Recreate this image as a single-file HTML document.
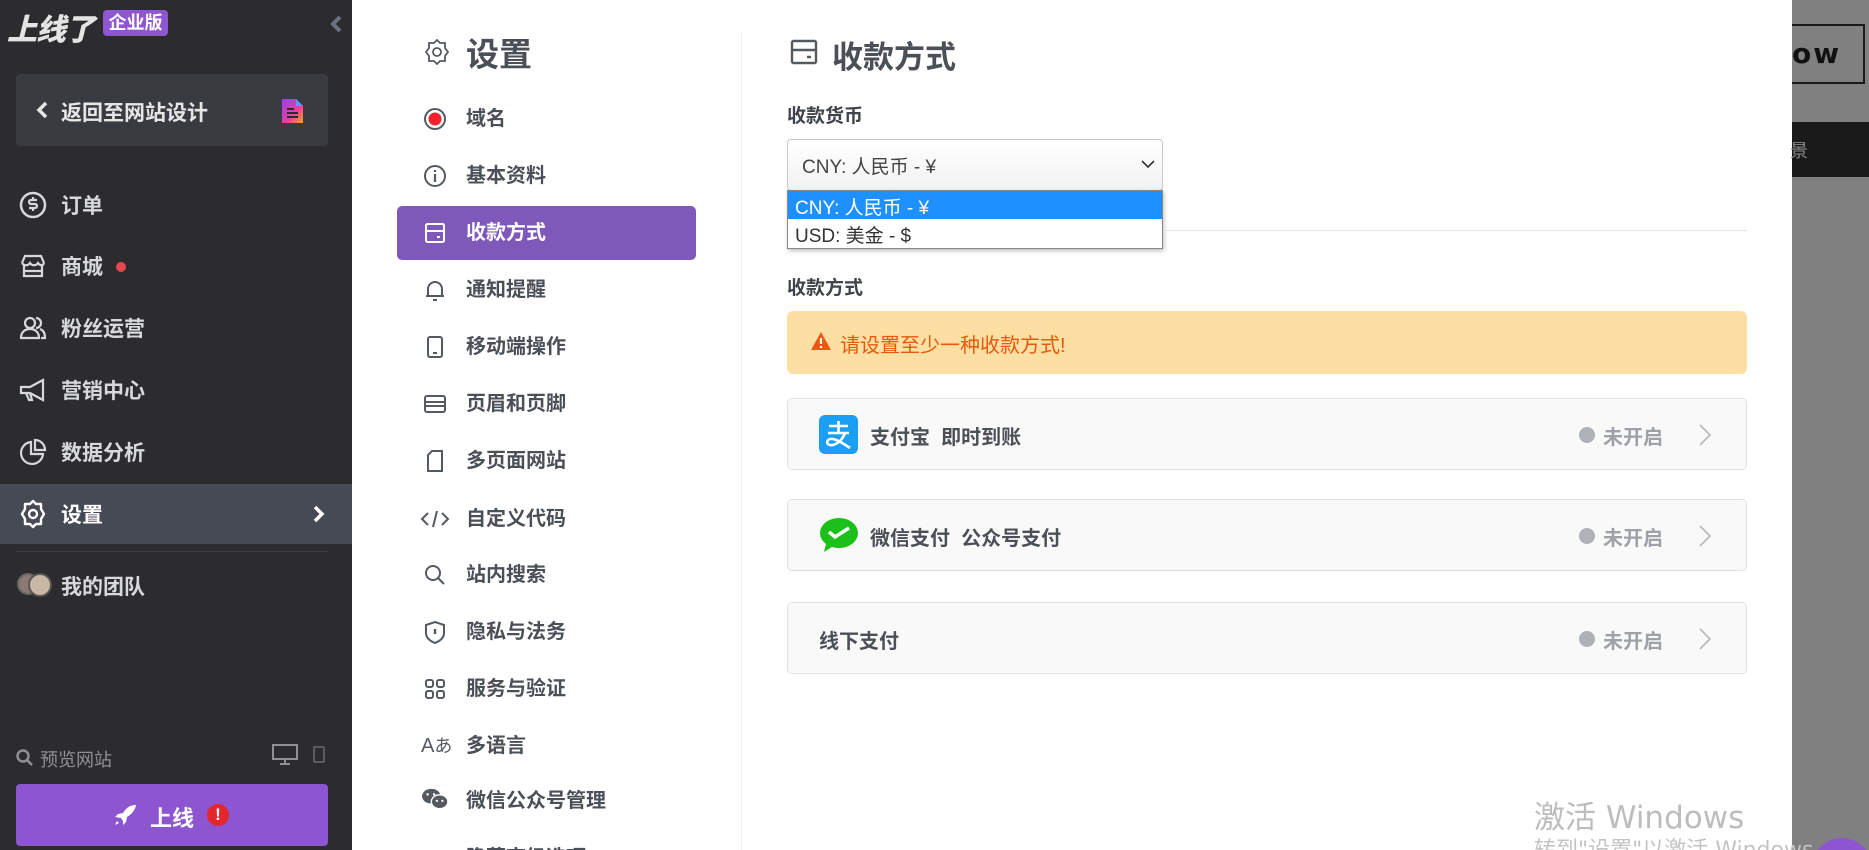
<!DOCTYPE html>
<html style="height:850px;overflow:hidden"><head><meta charset="utf-8"><style>
*{margin:0;padding:0;box-sizing:border-box}
html,body{width:1869px;height:850px;overflow:hidden}
body{position:relative;background:#fff;font-family:"Liberation Sans","Noto Sans CJK SC",sans-serif}
#wrap{position:absolute;left:0;top:0;width:1869px;height:850px;overflow:hidden}
.a{position:absolute}
#side{left:0;top:0;width:352px;height:850px;background:#2c2c2f}
.mi{position:absolute;left:0;width:352px;height:60px;display:flex;align-items:center;color:#d6d8dc;font-size:21px;font-weight:bold}
.mi svg{position:absolute;left:18px}
.mi span{position:absolute;left:61px}
.sn{position:absolute;left:466px;font-size:20px;font-weight:bold;color:#4b5058;line-height:28px}
.si{position:absolute;left:423px;width:24px;height:24px}
.card{position:absolute;left:787px;width:960px;height:72px;background:#f9f9f9;border:1px solid #e1e1e1;border-radius:5px}
.card .t{position:absolute;top:22px;font-size:20px;font-weight:bold;color:#4b5058}
.card .st{position:absolute;left:815px;top:22px;font-size:20px;font-weight:bold;color:#9ea1a6}
.card .dot{position:absolute;left:791px;top:28px;width:16px;height:16px;border-radius:50%;background:#aeb1b6}
.card .ch{position:absolute;left:910px;top:24px}
</style></head><body><div id="wrap">
<div id="side" class="a">
 <div class="a" style="left:7px;top:5px;font-size:30px;font-weight:900;color:#e4e4e4;font-style:italic;letter-spacing:-1px">上线了</div>
 <div class="a" style="left:103px;top:10px;width:65px;height:26px;background:#8f56d1;border-radius:4px;color:#fff;font-size:18px;font-weight:bold;text-align:center;line-height:26px">企业版</div>
 <svg class="a" style="left:328px;top:14px" width="16" height="20" viewBox="0 0 16 20"><path d="M12 3L5 10l7 7" stroke="#6b7280" stroke-width="4" fill="none"/></svg>
 <div class="a" style="left:16px;top:74px;width:312px;height:72px;background:#3a3b40;border-radius:4px"></div>
 <svg class="a" style="left:35px;top:100px" width="14" height="20" viewBox="0 0 14 20"><path d="M11 3L4 10l7 7" stroke="#e6e6e6" stroke-width="3.5" fill="none"/></svg>
 <div class="a" style="left:61px;top:97px;font-size:21px;font-weight:bold;color:#e6e6e6">返回至网站设计</div>
 <svg class="a" style="left:282px;top:99px" width="22" height="24" viewBox="0 0 22 24"><defs><linearGradient id="g" x1="0" y1="0" x2="1" y2="1"><stop offset="0" stop-color="#9b3cf0"/><stop offset=".6" stop-color="#e8409a"/><stop offset="1" stop-color="#f6a21a"/></linearGradient></defs><path d="M0 0h14l7 7v17H0z" fill="url(#g)"/><path d="M14 0l7 7h-7z" fill="#4aa2ff"/><path d="M5 10h7M5 14h11M5 18h11" stroke="#2c2c2f" stroke-width="2"/></svg>
 <div class="mi" style="top:175px"><svg width="30" height="30" viewBox="0 0 30 30"><circle cx="15" cy="15" r="12" stroke="#d6d8dc" stroke-width="2.5" fill="none"/><path d="M19 10h-6a2 2 0 000 4h4a2 2 0 010 4h-6M15 7v3M15 18v3" stroke="#d6d8dc" stroke-width="2.2" fill="none"/></svg><span>订单</span></div>
 <div class="mi" style="top:236px"><svg width="30" height="30" viewBox="0 0 30 30"><path d="M4 12l3-7h16l3 7M4 12c2 3 6 3 8 0 2 3 6 3 8 0 2 3 5 3 6 0M6 14v11h18V14M6 20h18" stroke="#d6d8dc" stroke-width="2.2" fill="none"/></svg><span>商城</span><i class="a" style="left:116px;top:26px;width:10px;height:10px;border-radius:50%;background:#e5484d"></i></div>
 <div class="mi" style="top:298px"><svg width="30" height="30" viewBox="0 0 30 30"><circle cx="12" cy="10" r="5" stroke="#d6d8dc" stroke-width="2.2" fill="none"/><path d="M3 25c0-6 4-9 9-9s9 3 9 9zM18 5a5 5 0 010 10M22 16c3 1 5 4 5 9h-4" stroke="#d6d8dc" stroke-width="2.2" fill="none"/></svg><span>粉丝运营</span></div>
 <div class="mi" style="top:360px"><svg width="30" height="30" viewBox="0 0 30 30"><path d="M3 12h9l13-7v20l-13-7H3zM8 18l3 7h3l-2-7" stroke="#d6d8dc" stroke-width="2.2" fill="none"/></svg><span>营销中心</span></div>
 <div class="mi" style="top:422px"><svg width="30" height="30" viewBox="0 0 30 30"><path d="M13 5a11 11 0 1012 12H13z" stroke="#d6d8dc" stroke-width="2.2" fill="none"/><path d="M17 3v10h10A10 10 0 0017 3z" stroke="#d6d8dc" stroke-width="2.2" fill="none"/></svg><span>数据分析</span></div>
 <div class="a" style="left:0;top:484px;width:352px;height:60px;background:#464a55"></div>
 <div class="mi" style="top:484px;color:#fff"><svg width="30" height="30" viewBox="0 0 30 30"><path d="M15 2l3 3h5v5l3 5-3 5v5h-5l-3 3-3-3H7v-5l-3-5 3-5V5h5z" stroke="#fff" stroke-width="2.4" fill="none" stroke-linejoin="round"/><circle cx="15" cy="15" r="4" stroke="#fff" stroke-width="2.4" fill="none"/></svg><span>设置</span><svg style="left:312px" width="14" height="20" viewBox="0 0 14 20"><path d="M3 3l7 7-7 7" stroke="#fff" stroke-width="3.5" fill="none"/></svg></div>
 <div class="a" style="left:16px;top:551px;width:312px;height:1px;background:#3e3f44"></div>
 <div class="a" style="left:17px;top:573px;width:22px;height:22px;border-radius:50%;background:#8a7a70;border:2px solid #666"></div>
 <div class="a" style="left:28px;top:573px;width:24px;height:24px;border-radius:50%;background:#c9b7a6;border:2px solid #555"></div>
 <div class="mi" style="top:556px"><span>我的团队</span></div>
 <svg class="a" style="left:15px;top:748px" width="20" height="20" viewBox="0 0 20 20"><circle cx="8" cy="8" r="5.5" stroke="#8e9095" stroke-width="2.5" fill="none"/><path d="M12 12l5 5" stroke="#8e9095" stroke-width="2.5"/></svg>
 <div class="a" style="left:40px;top:746px;font-size:18px;color:#8e9095">预览网站</div>
 <svg class="a" style="left:272px;top:744px" width="26" height="22" viewBox="0 0 26 22"><rect x="1" y="1" width="24" height="14" stroke="#8e9095" stroke-width="2" fill="none"/><path d="M13 15v4M8 20h10" stroke="#8e9095" stroke-width="2"/></svg>
 <svg class="a" style="left:313px;top:746px" width="12" height="18" viewBox="0 0 12 18"><rect x="1" y="1" width="10" height="15" rx="1" stroke="#5a5c61" stroke-width="2" fill="none"/></svg>
 <div class="a" style="left:16px;top:784px;width:312px;height:62px;background:#8e55d0;border-radius:4px"></div>
 <svg class="a" style="left:114px;top:804px" width="24" height="22" viewBox="0 0 24 22"><path d="M22 1c-6 0-10 3-13 8l-5 1-3 3 6 1 2 3v4l3-3 1-5c5-3 8-7 9-12zM3 17l-2 4 4-2" fill="#fff"/></svg>
 <div class="a" style="left:150px;top:801px;font-size:22px;font-weight:bold;color:#fff">上线</div>
 <div class="a" style="left:207px;top:804px;width:22px;height:22px;border-radius:50%;background:#e5262d;color:#fff;font-size:17px;font-weight:bold;text-align:center;line-height:22px">!</div>
</div>

<div class="a" style="left:1792px;top:0;width:77px;height:850px;background:#808080"></div>
<div class="a" style="left:1792px;top:24px;width:73px;height:60px;border:2px solid #1a1a1a;border-left:none"></div>
<div class="a" style="left:1792px;top:37px;font-size:28px;font-weight:bold;color:#111;letter-spacing:2px;font-family:'DejaVu Sans',sans-serif">ow</div>
<div class="a" style="left:1792px;top:122px;width:77px;height:55px;background:#1a1a1a"></div>
<div class="a" style="left:1790px;top:137px;font-size:18px;color:#888">景</div>
<div class="a" style="left:1812px;top:838px;width:60px;height:60px;border-radius:50%;background:#8e55d0"></div>

<svg class="si" style="top:38px;width:28px;height:28px" viewBox="0 0 28 28"><path d="M14 2l3 3h5v5l3 4-3 4v5h-5l-3 3-3-3H6v-5l-3-4 3-4V5h5z" stroke="#555a61" stroke-width="1.8" fill="none"/><circle cx="14" cy="14" r="4" stroke="#555a61" stroke-width="1.8" fill="none"/></svg>
<div class="a" style="left:466px;top:28px;font-size:33px;font-weight:bold;color:#4b5058">设置</div>
<svg class="si" style="top:107px" viewBox="0 0 24 24"><circle cx="12" cy="12" r="10" stroke="#555a61" stroke-width="2" fill="none"/><circle cx="12" cy="12" r="6.5" fill="#f5222d"/></svg>
<div class="sn" style="top:105px">域名</div>
<svg class="si" style="top:164px" viewBox="0 0 24 24"><circle cx="12" cy="12" r="10" stroke="#555a61" stroke-width="2" fill="none"/><path d="M12 10v8M12 6v2" stroke="#555a61" stroke-width="2.2"/></svg>
<div class="sn" style="top:162px">基本资料</div>
<div class="a" style="left:397px;top:206px;width:299px;height:54px;background:#7f59b9;border-radius:5px"></div>
<svg class="si" style="top:221px" viewBox="0 0 24 24"><rect x="3" y="3" width="18" height="18" rx="1.5" stroke="#fff" stroke-width="2" fill="none"/><path d="M3 10h18M14 16h3" stroke="#fff" stroke-width="2"/></svg>
<div class="sn" style="top:219px;color:#fff">收款方式</div>
<svg class="si" style="top:278px" viewBox="0 0 24 24"><path d="M5 18V11a7 7 0 0114 0v7zM3 18h18M10 22h4" stroke="#555a61" stroke-width="2" fill="none"/></svg>
<div class="sn" style="top:276px">通知提醒</div>
<svg class="si" style="top:335px" viewBox="0 0 24 24"><rect x="5" y="2" width="14" height="20" rx="2" stroke="#555a61" stroke-width="2" fill="none"/><path d="M10 18h4" stroke="#555a61" stroke-width="2"/></svg>
<div class="sn" style="top:333px">移动端操作</div>
<svg class="si" style="top:392px" viewBox="0 0 24 24"><rect x="2" y="4" width="20" height="16" rx="2" stroke="#555a61" stroke-width="2" fill="none"/><path d="M2 10h20M2 14h20" stroke="#555a61" stroke-width="2"/></svg>
<div class="sn" style="top:390px">页眉和页脚</div>
<svg class="si" style="top:449px" viewBox="0 0 24 24"><path d="M9 2h10v20H5V6z" stroke="#555a61" stroke-width="2" fill="none"/></svg>
<div class="sn" style="top:447px">多页面网站</div>
<svg class="si" style="top:507px;width:30px;left:420px" viewBox="0 0 30 24"><path d="M8 6L2 12l6 6M22 6l6 6-6 6M17 4l-4 16" stroke="#555a61" stroke-width="2" fill="none"/></svg>
<div class="sn" style="top:505px">自定义代码</div>
<svg class="si" style="top:563px" viewBox="0 0 24 24"><circle cx="10" cy="10" r="7" stroke="#555a61" stroke-width="2" fill="none"/><path d="M15 15l6 6" stroke="#555a61" stroke-width="2"/></svg>
<div class="sn" style="top:561px">站内搜索</div>
<svg class="si" style="top:620px" viewBox="0 0 24 24"><path d="M12 2l9 3v8c0 5-4 8-9 10-5-2-9-5-9-10V5z" stroke="#555a61" stroke-width="2" fill="none"/><path d="M12 9v5" stroke="#555a61" stroke-width="2.5"/></svg>
<div class="sn" style="top:618px">隐私与法务</div>
<svg class="si" style="top:677px" viewBox="0 0 24 24"><rect x="3" y="3" width="7" height="7" rx="2" stroke="#555a61" stroke-width="2" fill="none"/><rect x="14" y="3" width="7" height="7" rx="2" stroke="#555a61" stroke-width="2" fill="none"/><rect x="3" y="14" width="7" height="7" rx="2" stroke="#555a61" stroke-width="2" fill="none"/><rect x="14" y="14" width="7" height="7" rx="2" stroke="#555a61" stroke-width="2" fill="none"/></svg>
<div class="sn" style="top:675px">服务与验证</div>
<div class="a" style="left:421px;top:732px;font-size:20px;color:#555a61">A<span style="font-size:18px">あ</span></div>
<div class="sn" style="top:732px">多语言</div>
<svg class="si" style="top:787px;width:30px;left:420px" viewBox="0 0 30 26"><ellipse cx="11" cy="10" rx="10" ry="8" fill="#555a61"/><ellipse cx="20" cy="16" rx="9" ry="7.5" fill="#555a61" stroke="#fff" stroke-width="1.5"/><circle cx="7" cy="8" r="1.3" fill="#fff"/><circle cx="14" cy="8" r="1.3" fill="#fff"/><circle cx="17" cy="15" r="1.2" fill="#fff"/><circle cx="23" cy="15" r="1.2" fill="#fff"/></svg>
<div class="sn" style="top:787px">微信公众号管理</div>
<div class="sn" style="top:844px">隐藏高级选项</div>
<div class="a" style="left:741px;top:33px;width:1px;height:817px;background:#efefef"></div>

<svg class="a" style="left:790px;top:38px" width="28" height="28" viewBox="0 0 28 28"><rect x="2" y="3" width="24" height="22" rx="1.5" stroke="#555a61" stroke-width="2.4" fill="none"/><path d="M2 12h24M17 19h4" stroke="#555a61" stroke-width="2.4"/></svg>
<div class="a" style="left:832px;top:32px;font-size:31px;font-weight:bold;color:#4b5058">收款方式</div>
<div class="a" style="left:787px;top:101px;font-size:19px;font-weight:bold;color:#3f444b">收款货币</div>
<div class="a" style="left:787px;top:139px;width:376px;height:52px;border:1px solid #c8c8c8;border-radius:4px;background:linear-gradient(#fff,#f2f2f2)"></div>
<div class="a" style="left:802px;top:152px;font-size:19px;color:#444">CNY: 人民币 - ¥</div>
<svg class="a" style="left:1141px;top:159px" width="14" height="10" viewBox="0 0 14 10"><path d="M1 2l6 6 6-6" stroke="#333" stroke-width="1.6" fill="none"/></svg>
<div class="a" style="left:787px;top:190px;width:376px;height:59px;border:1px solid #888;background:#fff;box-shadow:1px 2px 4px rgba(0,0,0,.25)"></div>
<div class="a" style="left:788px;top:191px;width:374px;height:28px;background:#1e90ff"></div>
<div class="a" style="left:795px;top:193px;font-size:19px;color:#fff">CNY: 人民币 - ¥</div>
<div class="a" style="left:795px;top:221px;font-size:19px;color:#333">USD: 美金 - $</div>
<div class="a" style="left:1163px;top:230px;width:584px;height:1px;background:#e2e2e2"></div>
<div class="a" style="left:787px;top:273px;font-size:19px;font-weight:bold;color:#3f444b">收款方式</div>
<div class="a" style="left:787px;top:311px;width:960px;height:63px;background:#fddea3;border-radius:6px"></div>
<svg class="a" style="left:810px;top:331px" width="22" height="20" viewBox="0 0 22 20"><path d="M11 1L21 19H1z" fill="#e8590c"/><path d="M11 7v6M11 15v2" stroke="#fff" stroke-width="2.2"/></svg>
<div class="a" style="left:840px;top:329px;font-size:20px;color:#e8590c">请设置至少一种收款方式!</div>

<div class="card" style="top:398px">
 <svg class="a" style="left:31px;top:16px" width="39" height="39" viewBox="0 0 39 39"><rect width="39" height="39" rx="6" fill="#1a9ff2"/><path d="M10 11h19M19.5 6v12M9 18h21M26 18c-3 8-10 13-15 12-5-1-3-7 3-6 5 1 11 5 17 9" stroke="#fff" stroke-width="2.6" fill="none"/></svg>
 <div class="t" style="left:82px">支付宝 &nbsp;即时到账</div>
 <i class="dot"></i><div class="st">未开启</div>
 <svg class="ch" width="14" height="24" viewBox="0 0 14 24"><path d="M2 2l10 10-10 10" stroke="#b5b7bb" stroke-width="1.6" fill="none"/></svg>
</div>
<div class="card" style="top:499px">
 <svg class="a" style="left:31px;top:16px" width="40" height="38" viewBox="0 0 40 38"><ellipse cx="20" cy="17" rx="19" ry="15" fill="#1bc118"/><path d="M7 28l-2 8 8-5z" fill="#1bc118"/><path d="M10 16l6 5 14-9" stroke="#fff" stroke-width="3.5" fill="none"/></svg>
 <div class="t" style="left:82px">微信支付 &nbsp;公众号支付</div>
 <i class="dot"></i><div class="st">未开启</div>
 <svg class="ch" width="14" height="24" viewBox="0 0 14 24"><path d="M2 2l10 10-10 10" stroke="#b5b7bb" stroke-width="1.6" fill="none"/></svg>
</div>
<div class="card" style="top:602px">
 <div class="t" style="left:31px">线下支付</div>
 <i class="dot"></i><div class="st">未开启</div>
 <svg class="ch" width="14" height="24" viewBox="0 0 14 24"><path d="M2 2l10 10-10 10" stroke="#b5b7bb" stroke-width="1.6" fill="none"/></svg>
</div>

<div class="a" style="left:1534px;top:792px;font-size:31px;color:#bdbdbd;font-family:'DejaVu Sans','Noto Sans CJK SC',sans-serif">激活 Windows</div>
<div class="a" style="left:1534px;top:832px;font-size:22px;color:#c4c4c4;font-family:'DejaVu Sans','Noto Sans CJK SC',sans-serif;white-space:nowrap">转到"设置"以激活 Windows。</div>
</div></body></html>
